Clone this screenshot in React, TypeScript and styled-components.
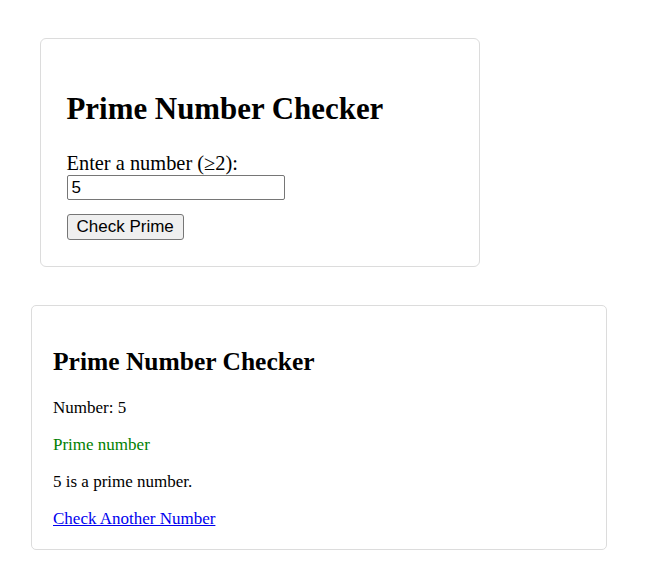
import React from "react";
import styled, { createGlobalStyle } from "styled-components";

const Global = createGlobalStyle`
  html, body { margin: 0; padding: 0; background: #ffffff; }
  body { font-family: "Liberation Serif", "Times New Roman", serif; color: #000; }
`;

const Page = styled.div`
  display: flex;
  flex-direction: column;
  align-items: flex-start;
  padding: 38px 0 0 31px;
`;

const Card = styled.div<{ $pad: string; $width: number; $offset: number; $radius: number }>`
  box-sizing: border-box;
  width: ${(p) => p.$width}px;
  margin-left: ${(p) => p.$offset}px;
  margin-bottom: 38px;
  padding: ${(p) => p.$pad};
  border: 1px solid #dcdcdc;
  border-radius: ${(p) => p.$radius}px;
  background: #fff;
`;

const Title = styled.h2<{ $size: number }>`
  font-size: ${(p) => p.$size}px;
  font-weight: bold;
  margin: 0.83em 0;
`;

const Form = styled.form`
  display: flex;
  flex-direction: column;
  align-items: flex-start;
`;

const Label = styled.label`
  font-size: 20.4px;
  line-height: normal;
`;

const NumberInput = styled.input`
  box-sizing: border-box;
  width: 218px;
  height: 25px;
  margin: 0;
  padding: 0 4px;
  border: 1px solid #767676;
  border-radius: 2px;
  font-family: "Liberation Sans", Arial, sans-serif;
  font-size: 17px;
  color: #000;
  background: #fff;
  outline: none;
`;

const SubmitButton = styled.button`
  box-sizing: border-box;
  height: 26px;
  margin-top: 14px;
  padding: 0 9px;
  border: 1px solid #767676;
  border-radius: 3px;
  background: #efefef;
  font-family: "Liberation Sans", Arial, sans-serif;
  font-size: 17px;
  color: #000;
`;

const Text = styled.p<{ $tone?: string }>`
  font-size: 17px;
  margin: 17px 0;
  color: ${(p) => p.$tone ?? "#000"};
`;

const Link = styled.a`
  display: block;
  font-size: 17px;
  color: #0000ee;
  text-decoration: underline;
`;

export default function App() {
  return (
    <>
      <Global />
      <Page>
        <Card $pad="26px 25.5px 25.5px" $width={440} $offset={9} $radius={6}>
          <Title $size={30.9}>Prime Number Checker</Title>
          <Form onSubmit={(e) => e.preventDefault()}>
            <Label htmlFor="num">Enter a number (≥2):</Label>
            <NumberInput id="num" type="text" defaultValue="5" />
            <SubmitButton type="submit">Check Prime</SubmitButton>
          </Form>
        </Card>
        <Card $pad="20px 21px 20px" $width={576} $offset={0} $radius={5}>
          <Title $size={25.5}>Prime Number Checker</Title>
          <Text>Number: 5</Text>
          <Text $tone="#008000">Prime number</Text>
          <Text>5 is a prime number.</Text>
          <Link href="#">Check Another Number</Link>
        </Card>
      </Page>
    </>
  );
}
